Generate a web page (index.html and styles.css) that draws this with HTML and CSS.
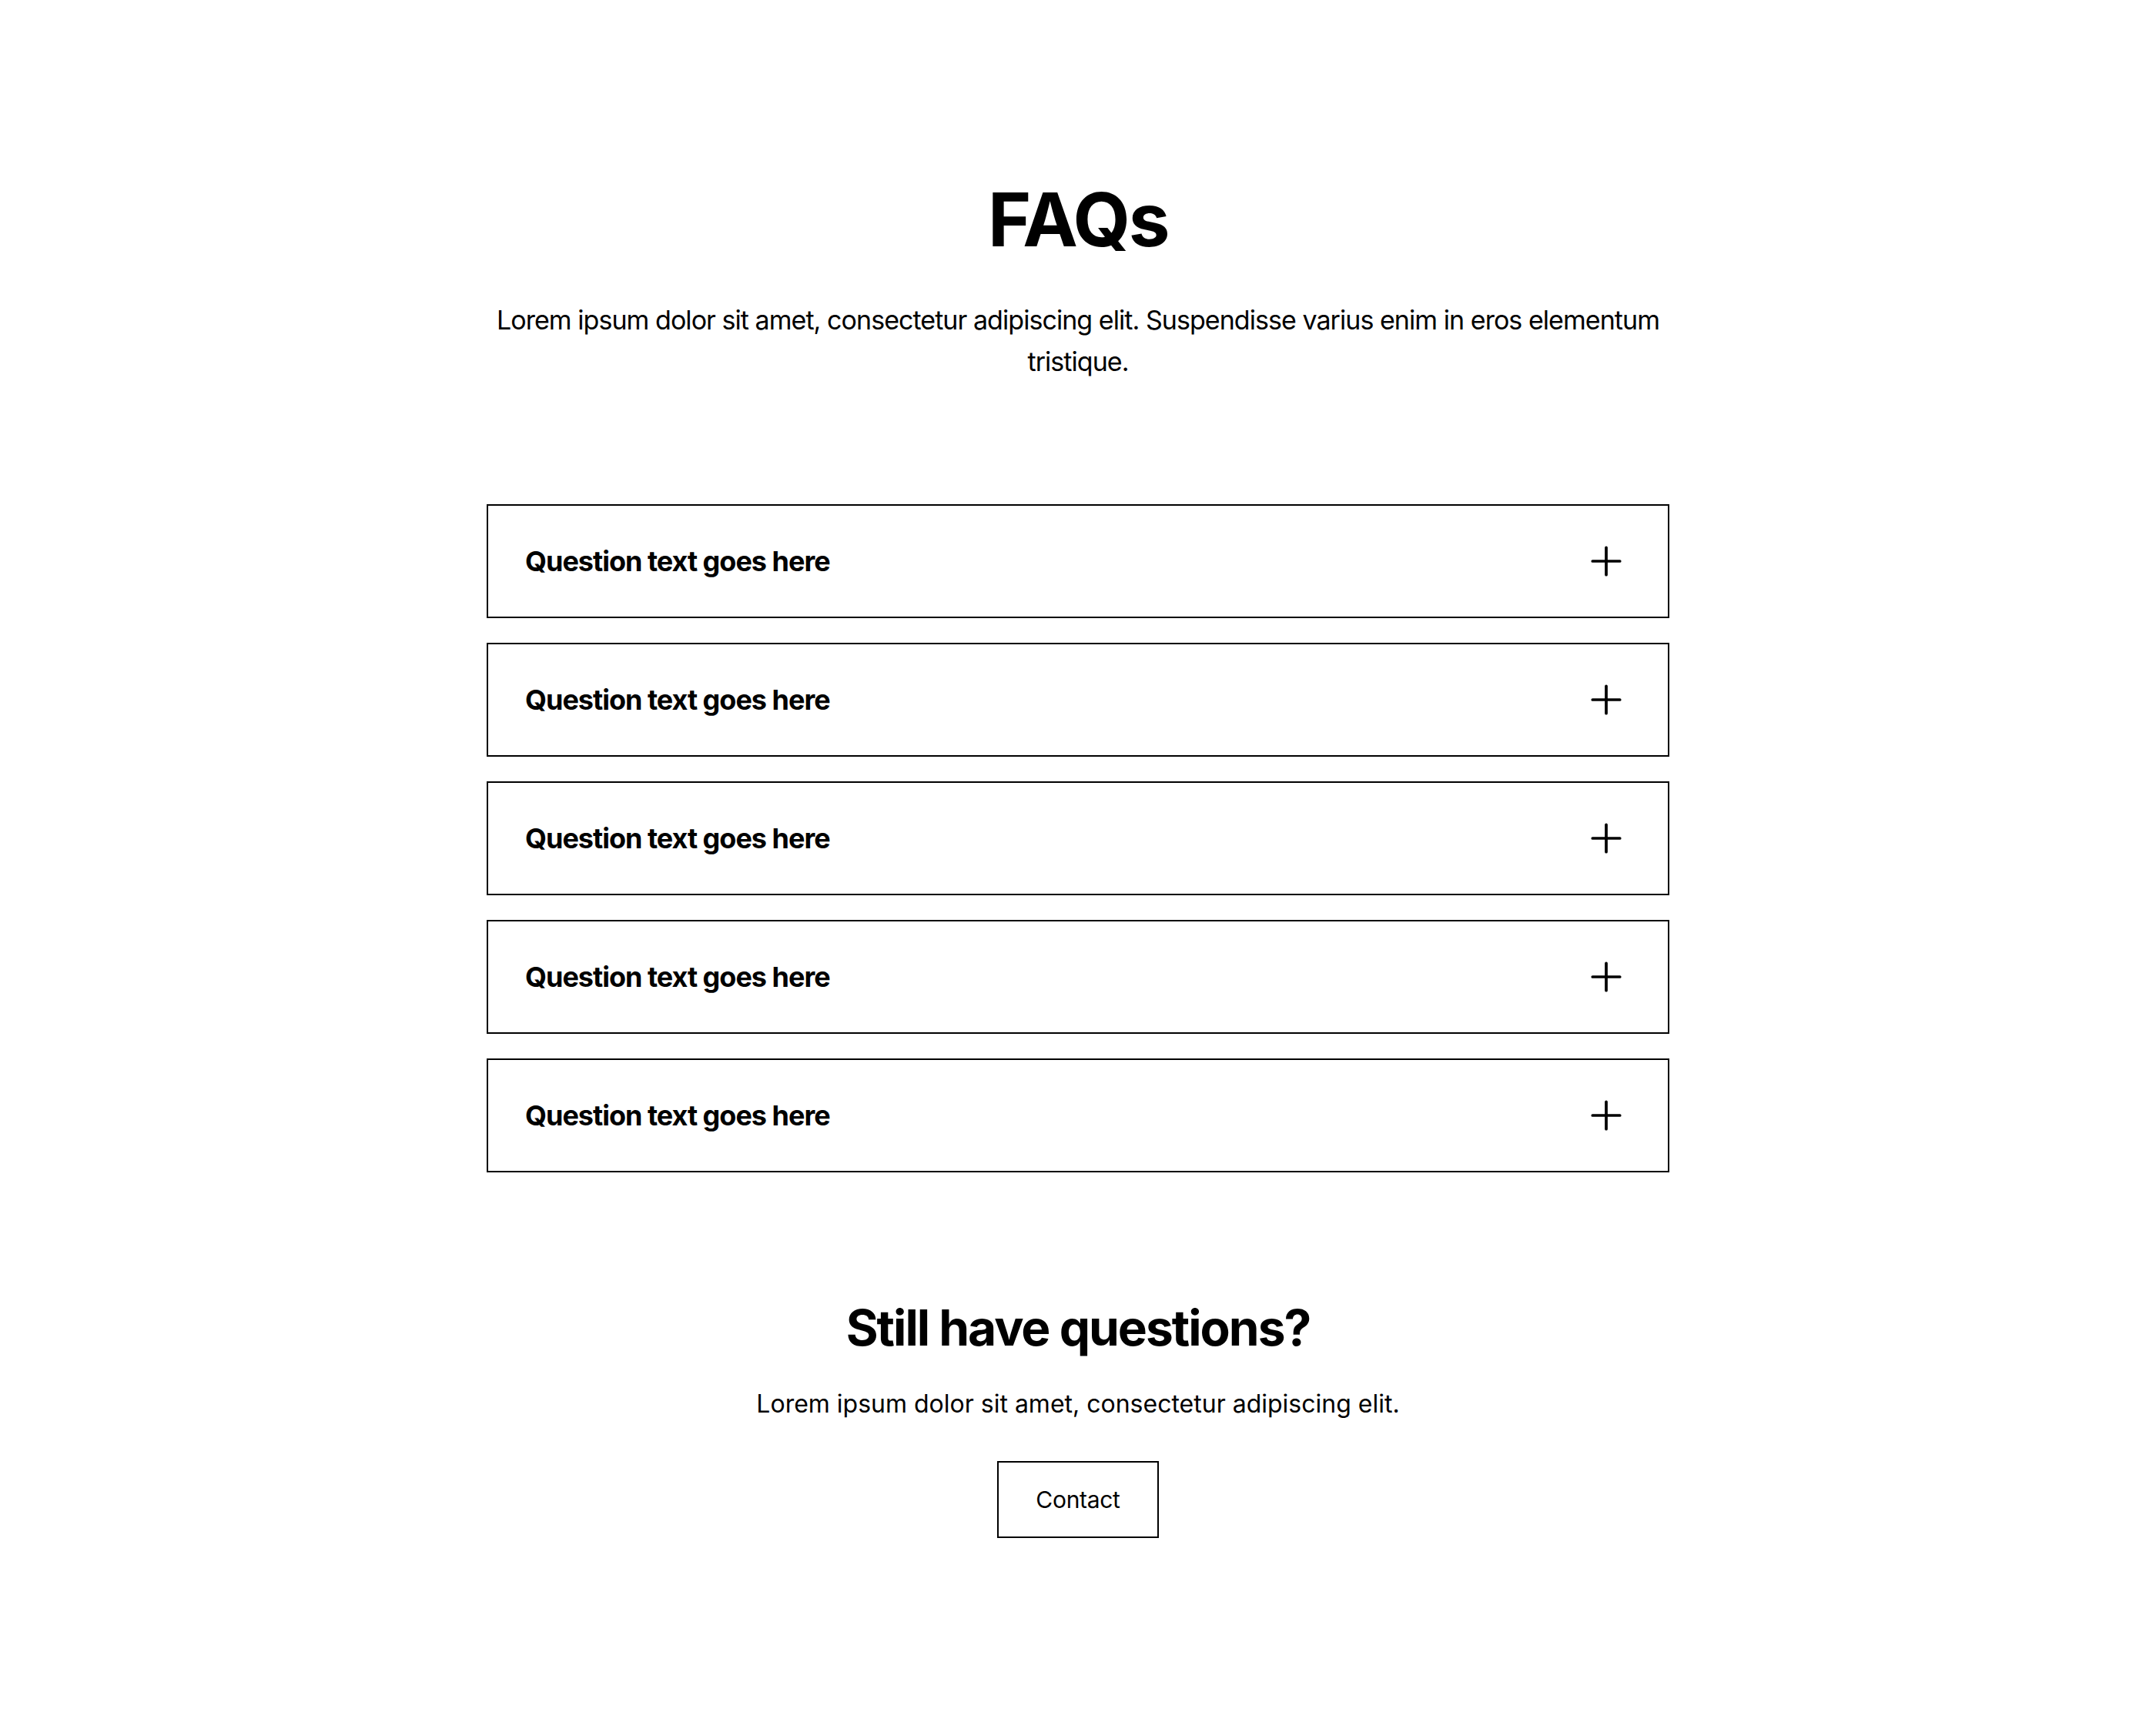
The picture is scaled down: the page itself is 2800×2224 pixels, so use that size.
FILE: index.html
```html
<!DOCTYPE html>
<html lang="en">
<head>
  <meta charset="UTF-8" />
  <meta name="viewport" content="width=device-width, initial-scale=1.0" />
  <title>FAQs</title>
  <link rel="stylesheet" href="styles.css">
</head>
<body>
  <section class="faq">
    <div class="container">
      <div class="faq-header">
        <h2>FAQs</h2>
        <p>Lorem ipsum dolor sit amet, consectetur adipiscing elit. Suspendisse varius enim in eros elementum tristique.</p>
      </div>

      <div class="faq-list">
        <div class="faq-item">
          <span class="question">Question text goes here</span>
          <svg class="plus" viewBox="0 0 15 15"><path d="M7.5 2.75V12.25M2.75 7.5H12.25"/></svg>
        </div>
        <div class="faq-item">
          <span class="question">Question text goes here</span>
          <svg class="plus" viewBox="0 0 15 15"><path d="M7.5 2.75V12.25M2.75 7.5H12.25"/></svg>
        </div>
        <div class="faq-item">
          <span class="question">Question text goes here</span>
          <svg class="plus" viewBox="0 0 15 15"><path d="M7.5 2.75V12.25M2.75 7.5H12.25"/></svg>
        </div>
        <div class="faq-item">
          <span class="question">Question text goes here</span>
          <svg class="plus" viewBox="0 0 15 15"><path d="M7.5 2.75V12.25M2.75 7.5H12.25"/></svg>
        </div>
        <div class="faq-item">
          <span class="question">Question text goes here</span>
          <svg class="plus" viewBox="0 0 15 15"><path d="M7.5 2.75V12.25M2.75 7.5H12.25"/></svg>
        </div>
      </div>

      <div class="contact">
        <h4>Still have questions?</h4>
        <p>Lorem ipsum dolor sit amet, consectetur adipiscing elit.</p>
        <button class="contact-btn">Contact</button>
      </div>
    </div>
  </section>
</body>
</html>
```

FILE: styles.css
```css
body {
  font-family: 'Inter', sans-serif;
  background: #fff;
  color: #000;
  margin: 0;
}
.faq {
  padding: 228px 0 224px;
}
.container {
  width: 1536px;
  margin: 0 auto;
}
.faq-header {
  text-align: center;
  margin-bottom: 158px;
}
.faq-header h2 {
  font-size: 96px;
  line-height: 1.2;
  font-weight: 700;
  letter-spacing: -2.4px;
  margin: 0 0 46px;
}
.faq-header p {
  font-size: 34px;
  line-height: 54px;
  letter-spacing: -0.95px;
  margin: 0;
}
.faq-list {
  display: grid;
  gap: 32px;
}
.faq-item {
  border: 2px solid #000;
  display: flex;
  align-items: center;
  justify-content: space-between;
  padding: 44px 52px 44px 48px;
}
.question {
  font-size: 36px;
  line-height: 1.5;
  font-weight: 700;
  letter-spacing: -1px;
}
.plus {
  width: 56px;
  height: 56px;
  fill: none;
  stroke: #000;
  stroke-width: 1;
  stroke-linecap: round;
}
.contact {
  text-align: center;
  margin-top: 160px;
}
.contact h4 {
  font-size: 64px;
  line-height: 1.3;
  font-weight: 700;
  letter-spacing: -2px;
  margin: 0 0 34px;
}
.contact p {
  font-size: 32px;
  line-height: 1.5;
  margin: 0;
}
.contact-btn {
  margin-top: 50px;
  font-family: 'Inter', sans-serif;
  font-size: 30px;
  line-height: 48px;
  letter-spacing: -0.3px;
  color: #000;
  background: #fff;
  border: 2px solid #000;
  padding: 24px 48px;
  cursor: pointer;
}
```
